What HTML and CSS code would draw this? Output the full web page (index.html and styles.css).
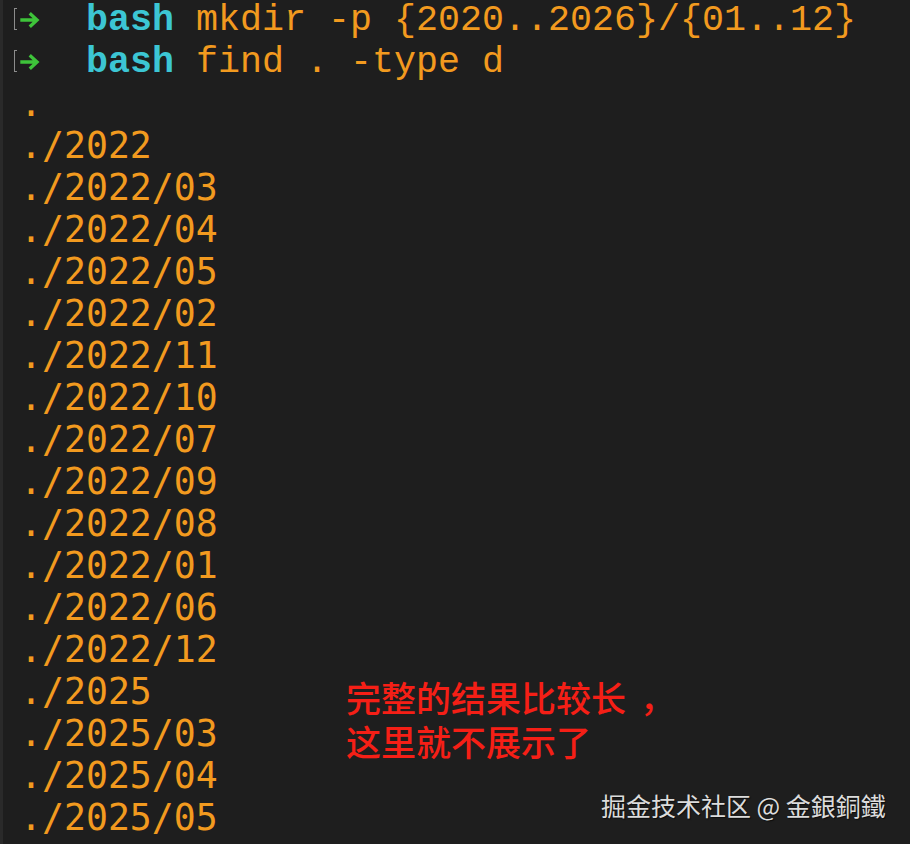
FILE: index.html
```html
<!DOCTYPE html>
<html lang="zh">
<head>
<meta charset="utf-8">
<title>terminal</title>
<link rel="stylesheet" href="styles.css">
</head>
<body>
<div class="term">
  <div class="line cmd"><span class="mark"></span><svg class="arrow" viewBox="0 0 20 16" width="20" height="16"><path d="M1 8H15M10 2.5L16 8L10 13.5" fill="none" stroke="#3ec43a" stroke-width="3.4" stroke-linecap="square"/></svg><span class="gap"></span><span class="dir">bash</span> mkdir -p {2020..2026}/{01..12}</div>
  <div class="line cmd"><span class="mark"></span><svg class="arrow" viewBox="0 0 20 16" width="20" height="16"><path d="M1 8H15M10 2.5L16 8L10 13.5" fill="none" stroke="#3ec43a" stroke-width="3.4" stroke-linecap="square"/></svg><span class="gap"></span><span class="dir">bash</span> find . -type d</div>
  <div class="line out">.</div>
  <div class="line out">./2022</div>
  <div class="line out">./2022/03</div>
  <div class="line out">./2022/04</div>
  <div class="line out">./2022/05</div>
  <div class="line out">./2022/02</div>
  <div class="line out">./2022/11</div>
  <div class="line out">./2022/10</div>
  <div class="line out">./2022/07</div>
  <div class="line out">./2022/09</div>
  <div class="line out">./2022/08</div>
  <div class="line out">./2022/01</div>
  <div class="line out">./2022/06</div>
  <div class="line out">./2022/12</div>
  <div class="line out">./2025</div>
  <div class="line out">./2025/03</div>
  <div class="line out">./2025/04</div>
  <div class="line out">./2025/05</div>
</div>
<div class="note">完整的结果比较长<span class="comma">，</span><br>这里就不展示了</div>
<div class="watermark">掘金技术社区 @ 金銀銅鐵</div>
</body>
</html>
```
FILE: styles.css
```css
html, body {
  margin: 0;
  padding: 0;
  background: #1e1e1e;
  width: 910px;
  height: 844px;
  overflow: hidden;
}
body {
  position: relative;
  border-left: 3px solid #2a2a2a;
  box-sizing: border-box;
}
.term {
  padding: 0 0 0 17px;
  margin-top: -1px;
  font-family: "Liberation Mono", monospace;
  font-size: 36.66px;
  line-height: 42px;
  color: #f29a1f;
}
.line {
  position: relative;
  height: 42px;
  white-space: pre;
}
.mark {
  position: absolute;
  left: -6px;
  top: 9px;
  width: 2px;
  height: 20px;
  border: 1.5px solid #8c8c8c;
  border-right: none;
}
.arrow {
  display: inline-block;
  width: 22px;
  vertical-align: 2px;
}
.gap {
  display: inline-block;
  width: 44px;
}
.dir {
  color: #3cc6d4;
  font-weight: bold;
}
.out {
  font-family: "DejaVu Sans Mono", monospace;
  font-size: 36.5px;
  font-weight: 300;
}
.note {
  position: absolute;
  left: 343px;
  top: 675px;
  font-family: "Noto Sans CJK SC", sans-serif;
  font-size: 35px;
  font-weight: 500;
  line-height: 44px;
  color: #f51f16;
}
.comma {
  padding-left: 14px;
}
.watermark {
  position: absolute;
  left: 598px;
  top: 788px;
  font-family: "Noto Sans CJK SC", sans-serif;
  font-size: 25px;
  line-height: 34px;
  color: #dcdcdc;
  text-shadow: 1px 1px 1px rgba(0,0,0,0.6);
}
```
